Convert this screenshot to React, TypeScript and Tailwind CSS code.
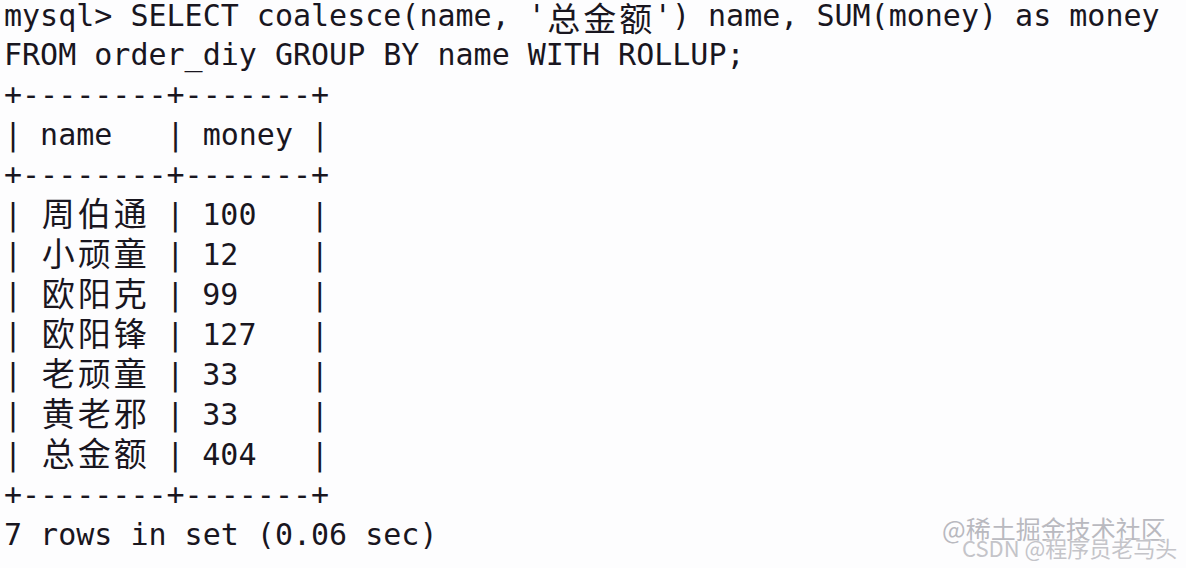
import React from "react";

const mono = "font-['DejaVu_Sans_Mono','Liberation_Mono',monospace]";

function Cjk({ text }: { text: string }) {
  return (
    <>
      {Array.from(text).map((c, i) => (
        <span
          key={i}
          className="inline-block w-[36px] text-center text-[33px] leading-[34px] align-top font-['Noto_Sans_CJK_SC','Noto_Sans',sans-serif]"
        >
          {c}
        </span>
      ))}
    </>
  );
}

function Line({ children }: { children: React.ReactNode }) {
  return <div className="h-[40px] leading-[40px] whitespace-pre">{children}</div>;
}

const rows: [string, string][] = [
  ["周伯通", "100"],
  ["小顽童", "12"],
  ["欧阳克", "99"],
  ["欧阳锋", "127"],
  ["老顽童", "33"],
  ["黄老邪", "33"],
  ["总金额", "404"],
];

export default function App() {
  const border = "+--------+-------+";
  return (
    <div className="relative w-[1186px] h-[568px] overflow-hidden bg-[#fdfdfe] text-[#19161f]">
      <div className={`${mono} text-[30px] pl-[4px]`}>
        <div className="h-[35px] leading-[32px] whitespace-pre">
          {"mysql> SELECT coalesce(name, '"}
          <Cjk text="总金额" />
          {"') name, SUM(money) as money"}
        </div>
        <Line>{"FROM order_diy GROUP BY name WITH ROLLUP;"}</Line>
        <Line>{border}</Line>
        <Line>{"| name   | money |"}</Line>
        <Line>{border}</Line>
        {rows.map(([n, m]) => (
          <Line key={n}>
            {"| "}
            <Cjk text={n} />
            {" | "}
            {m.padEnd(5, " ")}
            {" |"}
          </Line>
        ))}
        <Line>{border}</Line>
        <Line>{"7 rows in set (0.06 sec)"}</Line>
      </div>
      <div className="absolute left-[942px] top-[513px] flex flex-col whitespace-pre font-['Noto_Sans_CJK_SC',sans-serif] [text-shadow:0_0_2px_#ffffff,0_0_1px_#ffffff]">
        <div className="text-[25px] leading-[30px] text-[#b9b9bf]">@稀土掘金技术社区</div>
        <div className="-mt-[10px] ml-[20px] text-[22px] leading-[28px] text-[#c4c4c9]">CSDN @程序员老马头</div>
      </div>
    </div>
  );
}
